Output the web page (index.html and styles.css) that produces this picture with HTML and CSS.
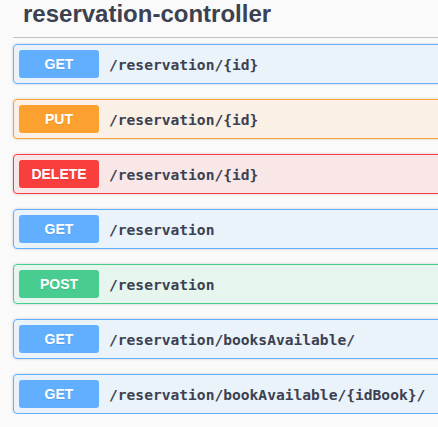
FILE: index.html
```html
<!DOCTYPE html>
<html>
<head>
<meta charset="utf-8">
<link rel="stylesheet" href="styles.css">
</head>
<body>
<div class="tag-section">
  <h3 class="tag-title">reservation-controller</h3>
  <div class="ops">
    <div class="opblock get"><span class="method">GET</span><span class="path">/reservation/{id}</span></div>
    <div class="opblock put"><span class="method">PUT</span><span class="path">/reservation/{id}</span></div>
    <div class="opblock delete"><span class="method">DELETE</span><span class="path">/reservation/{id}</span></div>
    <div class="opblock get"><span class="method">GET</span><span class="path">/reservation</span></div>
    <div class="opblock post"><span class="method">POST</span><span class="path">/reservation</span></div>
    <div class="opblock get"><span class="method">GET</span><span class="path">/reservation/booksAvailable/</span></div>
    <div class="opblock get"><span class="method">GET</span><span class="path">/reservation/bookAvailable/{idBook}/</span></div>
  </div>
</div>
</body>
</html>
```
FILE: styles.css
```css
html, body {
  margin: 0;
  padding: 0;
  background: #fafafa;
  overflow: hidden;
}
.tag-section {
  margin-left: 13px;
  width: 520px;
}
.tag-title {
  margin: 0;
  padding: 0 0 0 10px;
  height: 38px;
  box-sizing: border-box;
  border-bottom: 1px solid rgba(59, 65, 81, 0.3);
  font-family: "Liberation Sans", Arial, sans-serif;
  font-size: 24px;
  font-weight: 700;
  line-height: 28px;
  color: #3b4151;
}
.ops {
  display: flex;
  flex-direction: column;
  gap: 15px;
  padding-top: 6px;
}
.opblock {
  display: flex;
  align-items: center;
  padding: 5px;
  border: 1px solid;
  border-radius: 4px;
  box-shadow: 0 0 3px rgba(0, 0, 0, 0.19);
}
.method {
  width: 80px;
  height: 28px;
  border-radius: 3px;
  display: flex;
  align-items: center;
  justify-content: center;
  color: #fff;
  font-family: "Liberation Sans", Arial, sans-serif;
  font-size: 14px;
  font-weight: 700;
  text-shadow: 0 1px 0 rgba(0, 0, 0, 0.1);
}
.path {
  padding-left: 10px;
  font-family: "DejaVu Sans Mono", monospace;
  font-size: 14.6px;
  font-weight: 700;
  color: #3b4151;
}
.get { border-color: #61affe; background: rgba(97, 175, 254, 0.1); }
.get .method { background: #61affe; }
.put { border-color: #fca130; background: rgba(252, 161, 48, 0.1); }
.put .method { background: #fca130; }
.delete { border-color: #f93e3e; background: rgba(249, 62, 62, 0.1); }
.delete .method { background: #f93e3e; }
.post { border-color: #49cc90; background: rgba(73, 204, 144, 0.1); }
.post .method { background: #49cc90; }
```
